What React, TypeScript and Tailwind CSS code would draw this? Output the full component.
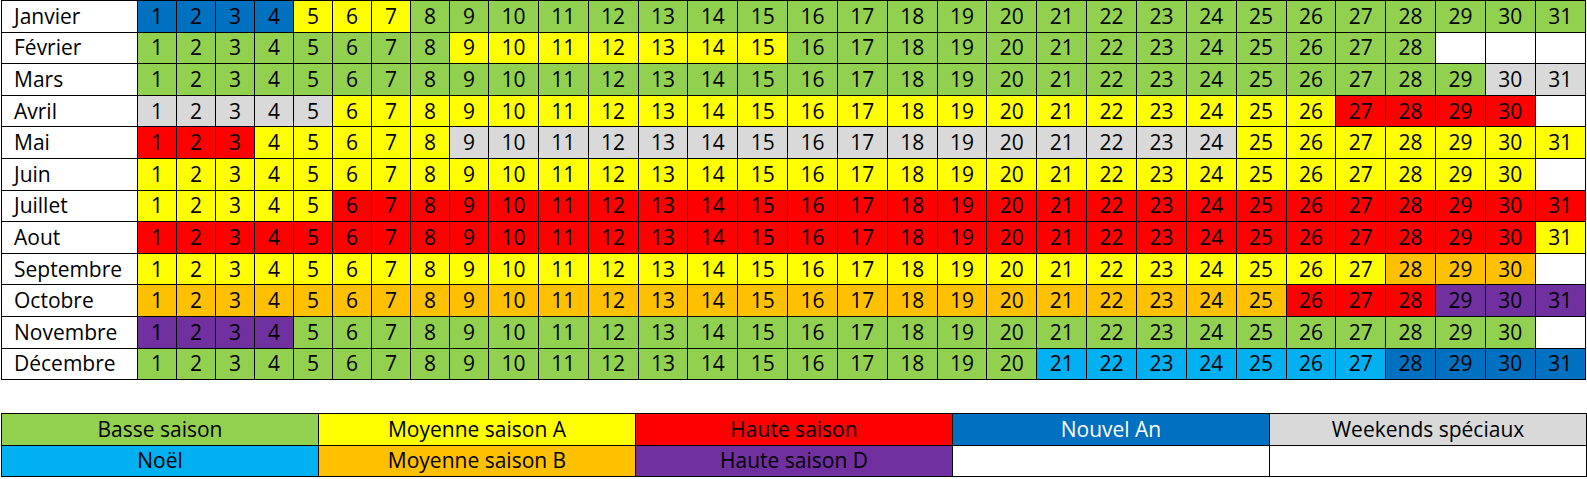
const COLORS: Record<string, string> = {
  G: "bg-[#92d050]",
  Y: "bg-[#ffff00]",
  R: "bg-[#ff0000]",
  B: "bg-[#0070c0]",
  L: "bg-[#00b0f0]",
  O: "bg-[#ffc000]",
  P: "bg-[#7030a0]",
  S: "bg-[#d9d9d9]",
  N: "bg-white",
};

// each month: list of [color, first day, last day]; "N" means no day (empty cell)
const months: { name: string; spans: [string, number, number][] }[] = [
  { name: "Janvier", spans: [["B", 1, 4], ["Y", 5, 7], ["G", 8, 31]] },
  { name: "Février", spans: [["G", 1, 8], ["Y", 9, 15], ["G", 16, 28], ["N", 29, 31]] },
  { name: "Mars", spans: [["G", 1, 29], ["S", 30, 31]] },
  { name: "Avril", spans: [["S", 1, 5], ["Y", 6, 26], ["R", 27, 30], ["N", 31, 31]] },
  { name: "Mai", spans: [["R", 1, 3], ["Y", 4, 8], ["S", 9, 24], ["Y", 25, 31]] },
  { name: "Juin", spans: [["Y", 1, 30], ["N", 31, 31]] },
  { name: "Juillet", spans: [["Y", 1, 5], ["R", 6, 31]] },
  { name: "Aout", spans: [["R", 1, 30], ["Y", 31, 31]] },
  { name: "Septembre", spans: [["Y", 1, 27], ["O", 28, 30], ["N", 31, 31]] },
  { name: "Octobre", spans: [["O", 1, 25], ["R", 26, 28], ["P", 29, 31]] },
  { name: "Novembre", spans: [["P", 1, 4], ["G", 5, 30], ["N", 31, 31]] },
  { name: "Décembre", spans: [["G", 1, 20], ["L", 21, 27], ["B", 28, 31]] },
];

const legend = [
  { label: "Basse saison", bg: "bg-[#92d050]", text: "text-black" },
  { label: "Moyenne saison A", bg: "bg-[#ffff00]", text: "text-black" },
  { label: "Haute saison", bg: "bg-[#ff0000]", text: "text-black" },
  { label: "Nouvel An", bg: "bg-[#0070c0]", text: "text-white" },
  { label: "Weekends spéciaux", bg: "bg-[#d9d9d9]", text: "text-black" },
  { label: "Noël", bg: "bg-[#00b0f0]", text: "text-black" },
  { label: "Moyenne saison B", bg: "bg-[#ffc000]", text: "text-black" },
  { label: "Haute saison D", bg: "bg-[#7030a0]", text: "text-black" },
  { label: "", bg: "bg-white", text: "text-black" },
  { label: "", bg: "bg-white", text: "text-black" },
];

function DayCell({ day, color }: { day: number; color: string }) {
  return (
    <div className={`${COLORS[color]} flex items-center justify-center`}>
      {color === "N" ? "" : day}
    </div>
  );
}

export default function App() {
  return (
    <div className="min-h-screen bg-white font-['Open_Sans','Liberation_Sans',sans-serif] text-[21px] leading-none text-black">
      <div className="ml-px grid w-max grid-cols-[135px_repeat(9,38px)_repeat(22,48.85px)] auto-rows-[30.6px] gap-px border border-black bg-black">
        {months.map((m) => (
          <div key={m.name} className="contents">
            <div className="flex items-center bg-white pl-3">{m.name}</div>
            {m.spans.flatMap(([c, a, b]) =>
              Array.from({ length: b - a + 1 }, (_, i) => (
                <DayCell key={`${m.name}-${a + i}`} day={a + i} color={c} />
              ))
            )}
          </div>
        ))}
      </div>

      <div className="ml-px mt-[33px] grid w-max grid-cols-[repeat(5,316px)] auto-rows-[30.5px] gap-px border border-black bg-black">
        {legend.map((l, i) => (
          <div key={i} className={`${l.bg} ${l.text} flex items-center justify-center`}>
            {l.label}
          </div>
        ))}
      </div>
    </div>
  );
}
